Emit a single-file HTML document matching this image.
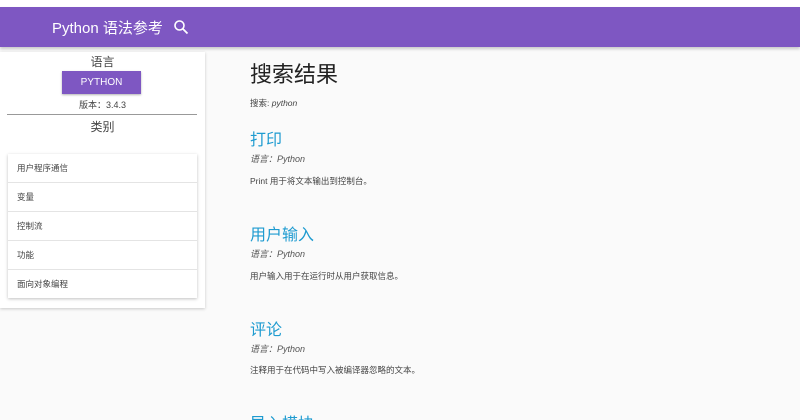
<!DOCTYPE html><html><head><meta charset="utf-8"><style>
html,body{margin:0;width:800px;height:420px;overflow:hidden}
body{background:#fafafa;font-family:"Liberation Sans","Noto Sans CJK SC",sans-serif;color:#333;position:relative}
.top{position:absolute;top:0;left:0;width:800px;height:7px;background:#fff}
.bar{position:absolute;top:7px;left:0;width:800px;height:40px;background:#7e57c2;box-shadow:0 2px 3px rgba(0,0,0,.2)}
.bar .t{position:absolute;left:52px;top:10px;color:#fff;font-size:15px}
.side{position:absolute;top:52px;left:0;width:205px;height:256px;background:#fff;box-shadow:0 1px 3px rgba(0,0,0,.2);text-align:center}
.a{position:absolute;left:0;width:205px;text-align:center;color:#444}
.btn{position:absolute;left:62px;top:19px;width:79px;height:23px;background:#7e57c2;color:#fff;font-size:10px;line-height:23px;box-shadow:0 1px 2px rgba(0,0,0,.3)}
.list{position:absolute;left:8px;top:102px;width:189px;background:#fff;box-shadow:0 1px 3px rgba(0,0,0,.25);text-align:left}
.list div{height:28px;line-height:28px;border-bottom:1px solid #e4e4e4;font-size:8.5px;padding-left:9px;color:#444}
.list div:last-child{border:none}
.m{position:absolute;left:250px}
h1{position:absolute;left:250px;top:57px;margin:0;font-size:22px;font-weight:normal;color:#222}
.h{font-size:16px;color:#1e9bd0}
.l{font-size:9px;font-style:italic;color:#555}
.d{font-size:8.5px;color:#444}
</style></head><body>
<div class="top"></div>
<div class="bar"><span class="t">Python 语法参考</span>
<svg style="position:absolute;left:173px;top:12px" width="16" height="16" viewBox="0 0 16 16"><circle cx="6.5" cy="6.5" r="4.5" fill="none" stroke="#fff" stroke-width="1.6"/><path d="M10 10l4.5 4.5" stroke="#fff" stroke-width="1.8"/></svg></div>
<div class="side">
<div class="a" style="top:1px;font-size:12px">语言</div>
<div class="btn">PYTHON</div>
<div class="a" style="top:46px;font-size:9px">版本：3.4.3</div>
<div style="position:absolute;left:7px;top:62px;width:190px;border-top:1px solid #999"></div>
<div class="a" style="top:66px;font-size:12px">类别</div>
<div class="list"><div>用户程序通信</div><div>变量</div><div>控制流</div><div>功能</div><div>面向对象编程</div></div>
</div>
<h1>搜索结果</h1>
<div class="m d" style="top:97px">搜索: <i>python</i></div>
<div class="m h" style="top:126px">打印</div>
<div class="m l" style="top:152px">语言：Python</div>
<div class="m d" style="top:175px">Print 用于将文本输出到控制台。</div>
<div class="m h" style="top:221px">用户输入</div>
<div class="m l" style="top:247px">语言：Python</div>
<div class="m d" style="top:270px">用户输入用于在运行时从用户获取信息。</div>
<div class="m h" style="top:316px">评论</div>
<div class="m l" style="top:342px">语言：Python</div>
<div class="m d" style="top:364px">注释用于在代码中写入被编译器忽略的文本。</div>
<div class="m h" style="top:410px">导入模块</div>
</body></html>
